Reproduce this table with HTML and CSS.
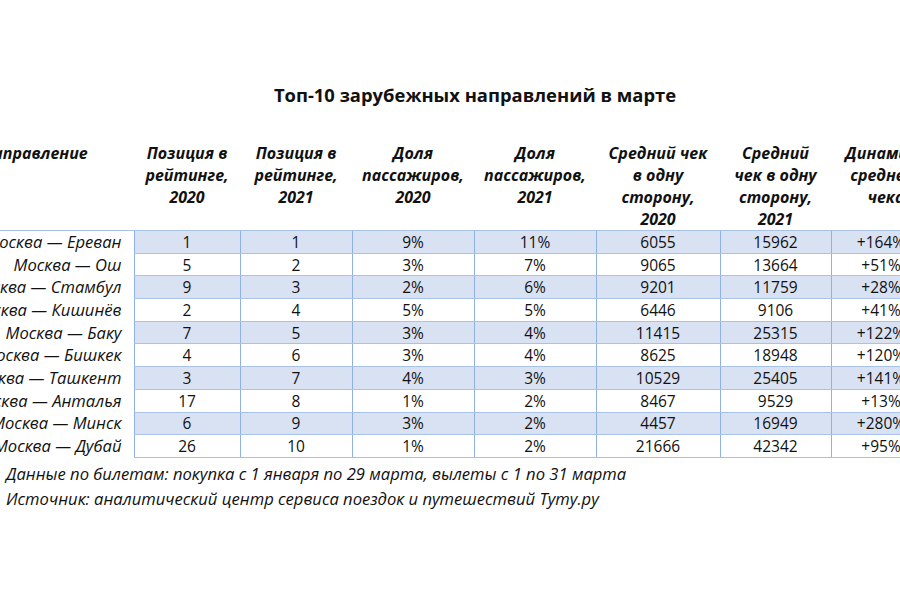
FILE: index.html
```html
<!DOCTYPE html>
<html lang="ru">
<head>
<meta charset="utf-8">
<title>Топ-10 зарубежных направлений в марте</title>
<link rel="stylesheet" href="styles.css">
</head>
<body>
<div class="page">
  <h1 class="title">Топ-10 зарубежных направлений в марте</h1>
  <table class="grid">
    <colgroup>
      <col class="c-route">
      <col class="c-pos1">
      <col class="c-pos2">
      <col class="c-sh1">
      <col class="c-sh2">
      <col class="c-ch1">
      <col class="c-ch2">
      <col class="c-dyn">
    </colgroup>
    <thead>
      <tr>
        <th class="h-route">Направление</th>
        <th>Позиция в<br>рейтинге,<br>2020</th>
        <th>Позиция в<br>рейтинге,<br>2021</th>
        <th>Доля<br>пассажиров,<br>2020</th>
        <th>Доля<br>пассажиров,<br>2021</th>
        <th>Средний чек<br>в одну<br>сторону,<br>2020</th>
        <th>Средний<br>чек в одну<br>сторону,<br>2021</th>
        <th class="h-dyn">Динамика<br>среднего<br>чека</th>
      </tr>
    </thead>
    <tbody>
      <tr class="band"><td class="route">Москва — Ереван</td><td>1</td><td>1</td><td>9%</td><td>11%</td><td>6055</td><td>15962</td><td>+164%</td></tr>
      <tr><td class="route">Москва — Ош</td><td>5</td><td>2</td><td>3%</td><td>7%</td><td>9065</td><td>13664</td><td>+51%</td></tr>
      <tr class="band"><td class="route">Москва — Стамбул</td><td>9</td><td>3</td><td>2%</td><td>6%</td><td>9201</td><td>11759</td><td>+28%</td></tr>
      <tr><td class="route">Москва — Кишинёв</td><td>2</td><td>4</td><td>5%</td><td>5%</td><td>6446</td><td>9106</td><td>+41%</td></tr>
      <tr class="band"><td class="route">Москва — Баку</td><td>7</td><td>5</td><td>3%</td><td>4%</td><td>11415</td><td>25315</td><td>+122%</td></tr>
      <tr><td class="route">Москва — Бишкек</td><td>4</td><td>6</td><td>3%</td><td>4%</td><td>8625</td><td>18948</td><td>+120%</td></tr>
      <tr class="band"><td class="route">Москва — Ташкент</td><td>3</td><td>7</td><td>4%</td><td>3%</td><td>10529</td><td>25405</td><td>+141%</td></tr>
      <tr><td class="route">Москва — Анталья</td><td>17</td><td>8</td><td>1%</td><td>2%</td><td>8467</td><td>9529</td><td>+13%</td></tr>
      <tr class="band"><td class="route">Москва — Минск</td><td>6</td><td>9</td><td>3%</td><td>2%</td><td>4457</td><td>16949</td><td>+280%</td></tr>
      <tr><td class="route">Москва — Дубай</td><td>26</td><td>10</td><td>1%</td><td>2%</td><td>21666</td><td>42342</td><td>+95%</td></tr>
    </tbody>
  </table>
  <div class="notes">
    <p class="note">Данные по билетам: покупка с 1 января по 29 марта, вылеты с 1 по 31 марта</p>
    <p class="note">Источник: аналитический центр сервиса поездок и путешествий Туту.ру</p>
  </div>
</div>
</body>
</html>
```
FILE: styles.css
```css
html, body {
  margin: 0;
  padding: 0;
  background: #ffffff;
  overflow: hidden;
}
body {
  width: 900px;
  height: 600px;
  font-family: "Open Sans", "Noto Sans", "DejaVu Sans", sans-serif;
  color: #111111;
}
.page {
  width: 900px;
  overflow: hidden;
  padding-top: 82px;
}
.title {
  margin: 0 0 0 50px;
  font-size: 18.4px;
  line-height: 26px;
  font-weight: 700;
  text-align: center;
  color: #111;
}
.grid {
  margin-top: 34px;
  margin-left: -66px;
  border-collapse: collapse;
  table-layout: fixed;
  width: 997px;
}
.c-route { width: 200px; }
.c-pos1 { width: 106px; }
.c-pos2 { width: 112px; }
.c-sh1 { width: 122px; }
.c-sh2 { width: 122px; }
.c-ch1 { width: 124px; }
.c-ch2 { width: 111px; }
.c-dyn { width: 100px; }

.grid th {
  font-size: 16px;
  font-weight: 700;
  font-style: italic;
  line-height: 22px;
  vertical-align: top;
  text-align: center;
  padding: 0;
  height: 88px;
  white-space: nowrap;
  border-bottom: 1px solid #a9c2ea;
}
.grid th.h-route {
  text-align: left;
  padding-left: 48px;
}
.grid th.h-dyn {
  padding-left: 10px;
}
.grid td {
  font-size: 15.5px;
  line-height: 20px;
  height: 21.7px;
  padding: 0;
  text-align: center;
  white-space: nowrap;
  border: 1px solid #a9c2ea;
  border-left-color: #8fb1e3;
  border-right-color: #8fb1e3;
}
.grid td.route {
  font-size: 16.6px;
  font-style: italic;
  text-align: right;
  padding-right: 12px;
  border: none;
  background: #ffffff;
}
.grid tr.band td {
  background: #d9e2f3;
}
.grid tr.band td.route {
  background: #ffffff;
}
.notes {
  padding: 3px 0 0 6px;
}
.note {
  margin: 0;
  font-size: 16.6px;
  line-height: 25px;
  font-style: italic;
  white-space: nowrap;
}
```
